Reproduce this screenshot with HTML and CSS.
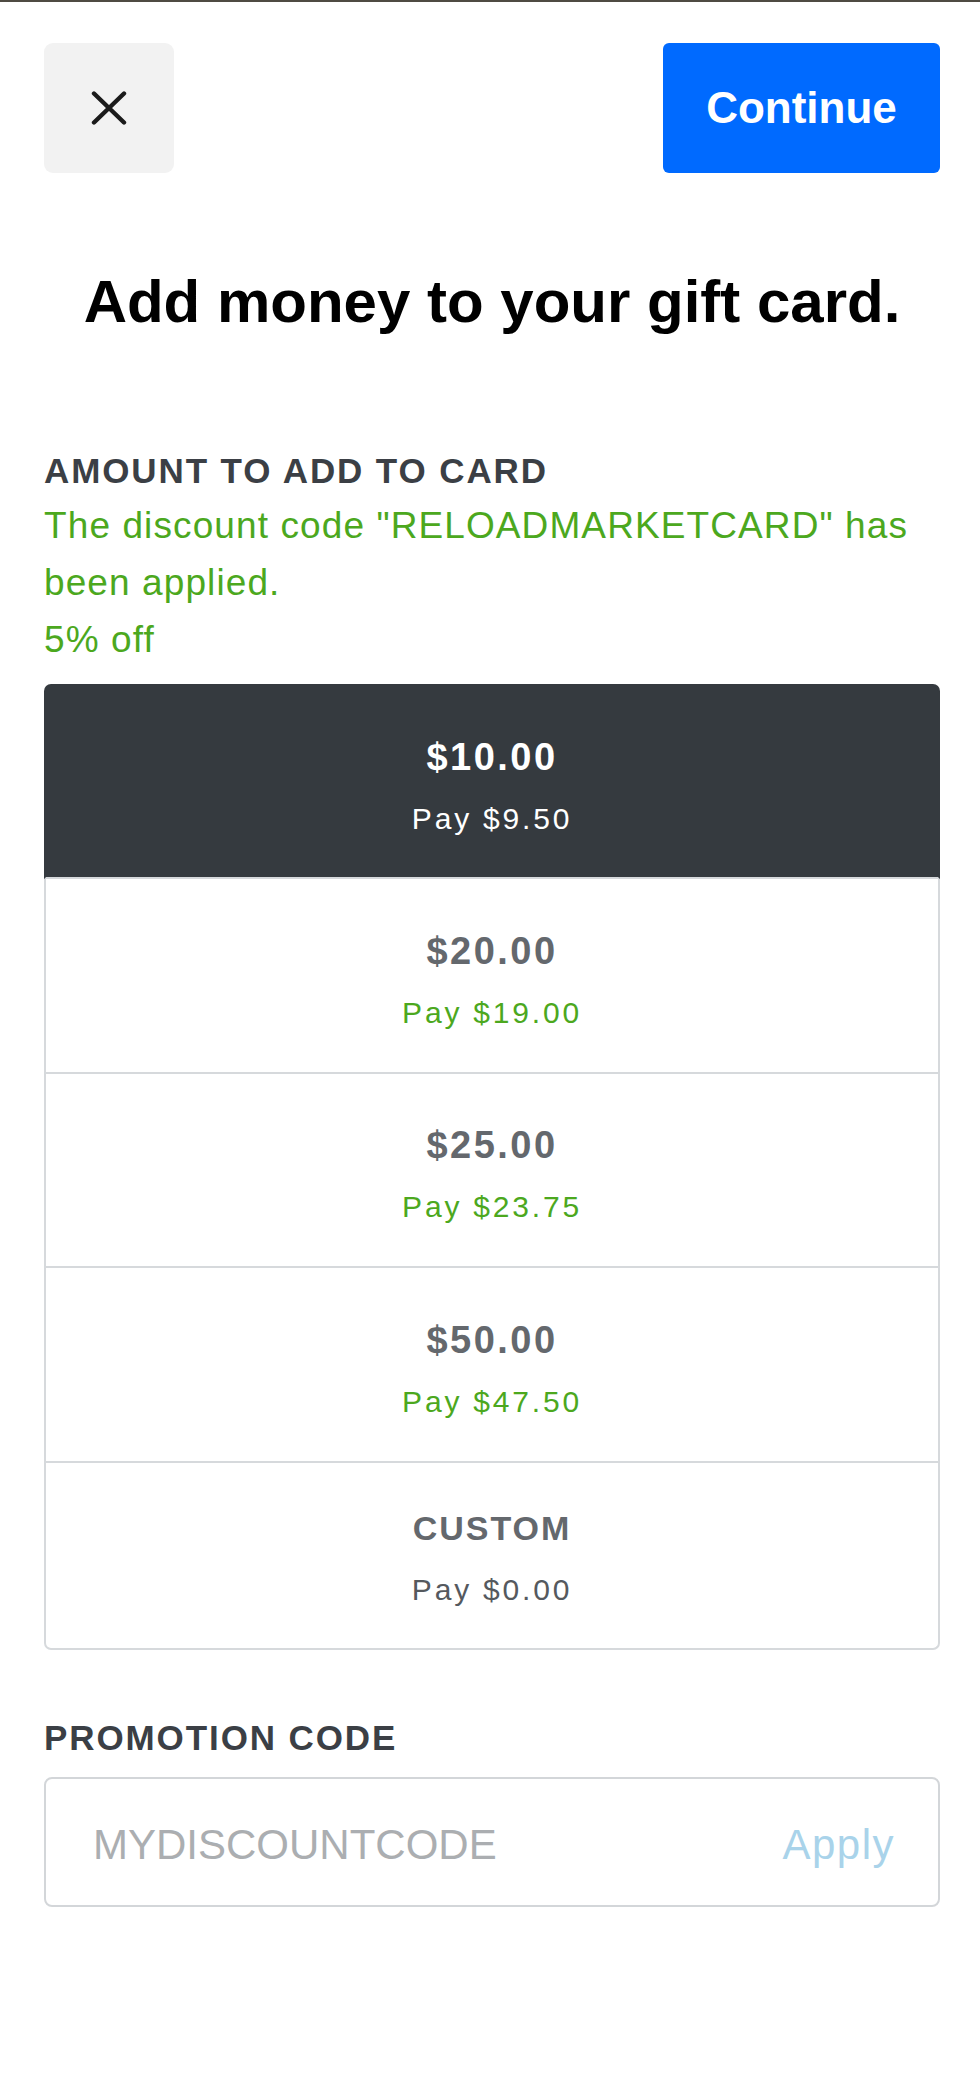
FILE: index.html
```html
<!DOCTYPE html>
<html lang="en">
<head>
<meta charset="utf-8">
<title>Add money to your gift card</title>
<link rel="stylesheet" href="styles.css">
</head>
<body>
<div class="topline"></div>
<div class="page">
  <header class="header">
    <button class="close" aria-label="Close">
      <svg width="36" height="34" viewBox="0 0 36 34" aria-hidden="true">
        <path d="M3 2.5 L33 31.5 M33 2.5 L3 31.5" stroke="#1b1b1b" stroke-width="4.4" stroke-linecap="round" fill="none"/>
      </svg>
    </button>
    <button class="continue">Continue</button>
  </header>

  <h1 class="title">Add money to your gift card.</h1>

  <section class="amount">
    <div class="label">AMOUNT TO ADD TO CARD</div>
    <p class="discount">The discount code "RELOADMARKETCARD" has been applied.<br>5% off</p>

    <div class="options">
      <div class="option selected">
        <div class="value">$10.00</div>
        <div class="pay">Pay $9.50</div>
      </div>
      <div class="option">
        <div class="value">$20.00</div>
        <div class="pay green">Pay $19.00</div>
      </div>
      <div class="option">
        <div class="value">$25.00</div>
        <div class="pay green">Pay $23.75</div>
      </div>
      <div class="option">
        <div class="value">$50.00</div>
        <div class="pay green">Pay $47.50</div>
      </div>
      <div class="option custom">
        <div class="value caps">CUSTOM</div>
        <div class="pay">Pay $0.00</div>
      </div>
    </div>
  </section>

  <section class="promo">
    <div class="label">PROMOTION CODE</div>
    <div class="promo-field">
      <input class="promo-input" type="text" placeholder="MYDISCOUNTCODE">
      <span class="apply">Apply</span>
    </div>
  </section>
</div>
</body>
</html>
```

FILE: styles.css
```css
* {
  box-sizing: border-box;
}

html, body {
  margin: 0;
  padding: 0;
  background: #ffffff;
}

body {
  font-family: "Liberation Sans", Arial, sans-serif;
  color: #000;
}

.topline {
  height: 2px;
  background: #4f4b43;
}

.page {
  padding: 0 40px 0 44px;
}

.header {
  display: flex;
  justify-content: space-between;
  align-items: flex-start;
  padding-top: 41px;
}

.close {
  width: 130px;
  height: 130px;
  border: none;
  border-radius: 9px;
  background: #f2f2f2;
  display: flex;
  align-items: center;
  justify-content: center;
  padding: 0;
}

.continue {
  width: 277px;
  height: 130px;
  border: none;
  border-radius: 6px;
  background: #006aff;
  color: #ffffff;
  font-family: "Liberation Sans", Arial, sans-serif;
  font-weight: 700;
  font-size: 44px;
  padding: 0;
}

.title {
  margin: 93px 0 0;
  font-size: 60px;
  line-height: 72px;
  font-weight: 700;
  text-align: center;
  color: #000;
}

.label {
  font-size: 35px;
  line-height: 40px;
  font-weight: 700;
  letter-spacing: 1.9px;
  color: #3b3f45;
}

.amount {
  margin-top: 113px;
}

.discount {
  margin: 6px 0 0;
  font-size: 37px;
  line-height: 57px;
  letter-spacing: 1.1px;
  color: #4ca81e;
}

.options {
  margin-top: 16px;
  display: flex;
  flex-direction: column;
}

.option {
  height: 195px;
  border: 2px solid #d6d9dc;
  border-top: none;
  display: flex;
  flex-direction: column;
  align-items: center;
  justify-content: center;
  padding-top: 12px;
  text-align: center;
  color: #64686d;
}

.option:first-child {
  height: 195px;
  border-top: 2px solid #353a3f;
  border-radius: 7px 7px 0 0;
}

.option:nth-child(3) {
  height: 194px;
}

.option.selected {
  background: #353a3f;
  border-left-color: #353a3f;
  border-right-color: #353a3f;
  color: #ffffff;
}

.option.custom {
  height: 187px;
  border-radius: 0 0 7px 7px;
  padding-top: 6px;
}

.value {
  font-size: 38px;
  line-height: 50px;
  font-weight: 700;
  letter-spacing: 2.5px;
}

.value.caps {
  font-size: 34px;
  letter-spacing: 2px;
}

.pay {
  margin-top: 12px;
  font-size: 30px;
  line-height: 50px;
  letter-spacing: 2.8px;
  color: #55595e;
}

.selected .pay {
  color: #ffffff;
}

.pay.green {
  color: #4ca81e;
}

.promo {
  margin-top: 68px;
}

.promo-field {
  margin-top: 19px;
  height: 130px;
  border: 2px solid #d3d6d9;
  border-radius: 8px;
  display: flex;
  align-items: center;
  padding: 6px 43px 0 47px;
}

.promo-input {
  flex: 1;
  min-width: 0;
  border: none;
  outline: none;
  background: transparent;
  padding: 0;
  font-family: "Liberation Sans", Arial, sans-serif;
  font-size: 42px;
  color: #333;
}

.promo-input::placeholder {
  color: #abaeb1;
  opacity: 1;
}

.apply {
  font-size: 42px;
  letter-spacing: 1.5px;
  color: #a9d3ea;
}
```
